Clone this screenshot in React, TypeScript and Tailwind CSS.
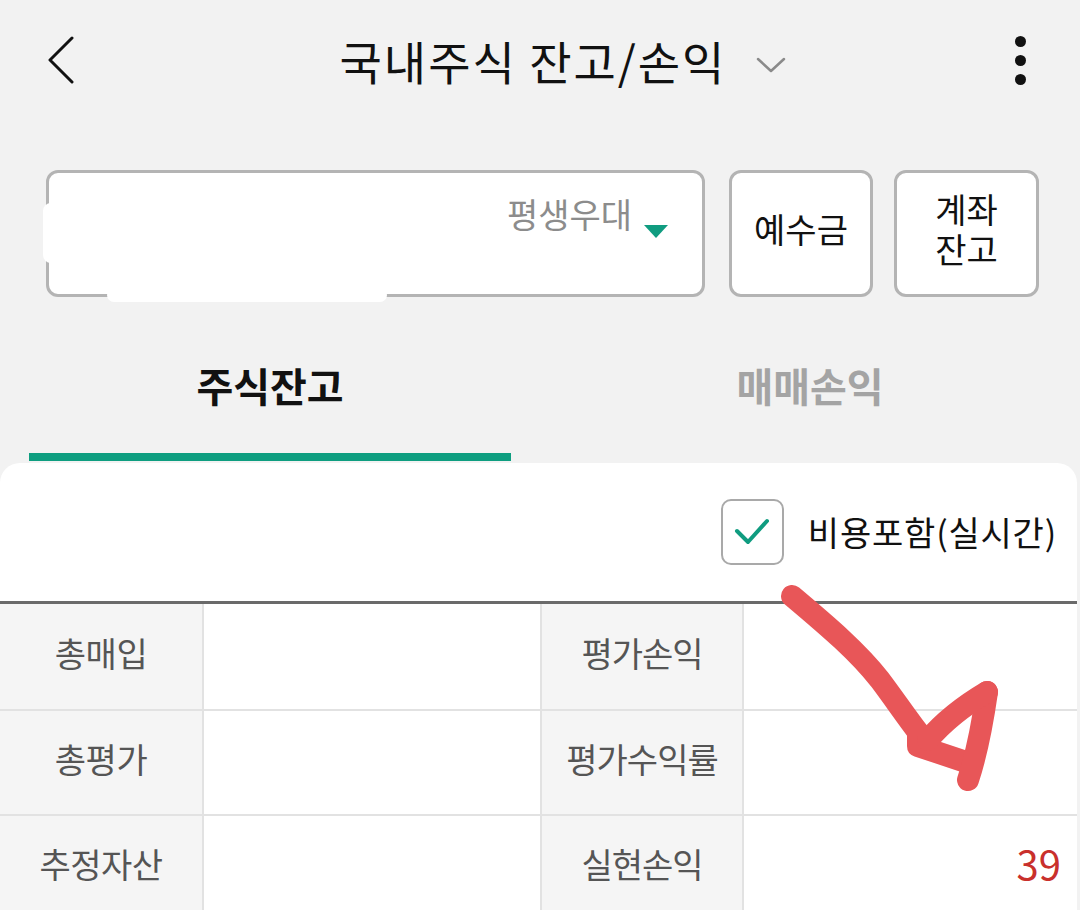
import React from 'react';

const rows = [
  ['총매입', '', '평가손익', ''],
  ['총평가', '', '평가수익률', ''],
  ['추정자산', '', '실현손익', '39'],
];

export default function App() {
  return (
    <div
      className="relative w-[1080px] h-[910px] overflow-hidden bg-[#f2f2f2] flex flex-col"
      style={{ fontFamily: '"Noto Sans CJK KR", "Noto Sans", sans-serif' }}
    >
      {/* Header */}
      <header className="h-[120px] flex items-center pl-[46px] pr-[54px] shrink-0">
        <svg width="30" height="48" viewBox="0 0 30 48" className="shrink-0">
          <path d="M26 2 L4 24 L26 46" fill="none" stroke="#111" strokeWidth="3" strokeLinecap="round" strokeLinejoin="round" />
        </svg>
        <div className="flex-1 flex justify-center items-center pl-[36px]">
          <h1 className="text-[46px] leading-none text-[#111] tracking-[2px]">국내주식 잔고/손익</h1>
          <svg width="30" height="16" viewBox="0 0 30 16" className="ml-[30px] mt-[10px]">
            <path d="M2 2 L15 14 L28 2" fill="none" stroke="#8a8a8a" strokeWidth="2.5" strokeLinecap="round" strokeLinejoin="round" />
          </svg>
        </div>
        <div className="flex flex-col items-center gap-[8px] w-[12px]">
          <span className="w-[11px] h-[11px] rounded-full bg-[#111]" />
          <span className="w-[11px] h-[11px] rounded-full bg-[#111]" />
          <span className="w-[11px] h-[11px] rounded-full bg-[#111]" />
        </div>
      </header>

      {/* Account selector + buttons */}
      <div className="mt-[50px] flex pl-[46px] pr-[41px] h-[127px] shrink-0">
        <div className="relative w-[659px] h-full bg-white border-[3px] border-[#b4b4b4] rounded-[12px] flex justify-end items-start pt-[20px] pr-[34px]">
          <span className="text-[34px] leading-none text-[#8c8c8c] mt-[4px]">평생우대</span>
          <span className="ml-[12px] mt-[32px] w-0 h-0 border-l-[12px] border-r-[12px] border-t-[13px] border-l-transparent border-r-transparent border-t-[#109c80]" />
          <span className="absolute left-[58px] bottom-[-8px] w-[280px] h-[14px] rounded-full bg-white" />
          <span className="absolute left-[-6px] top-[30px] w-[16px] h-[60px] rounded-full bg-white" />
        </div>
        <button className="ml-[24px] w-[144px] h-full pb-[10px] bg-white border-[3px] border-[#b4b4b4] rounded-[12px] flex items-center justify-center text-[34px] leading-none text-[#111]">
          예수금
        </button>
        <button className="ml-[21px] w-[145px] h-full pb-[10px] bg-white border-[3px] border-[#b4b4b4] rounded-[12px] flex flex-col items-center justify-center gap-[4px] text-[34px] leading-[36px] text-[#111]">
          <span className="block">계좌</span>
          <span className="block">잔고</span>
        </button>
      </div>

      {/* Tabs */}
      <div className="mt-[40px] flex px-[29px] gap-[58px] shrink-0">
        <div className="flex-1 h-[124px] flex items-center justify-center pb-[20px] border-b-[8px] border-[#0e9e80] text-[40px] font-bold text-[#111]">
          주식잔고
        </div>
        <div className="flex-1 h-[124px] flex items-center justify-center pb-[20px] border-b-[8px] border-transparent text-[40px] font-bold text-[#a4a4a4]">
          매매손익
        </div>
      </div>

      {/* Card */}
      <div className="mt-[2px] w-[1077px] flex-1 bg-white rounded-t-[20px] flex flex-col">
        <div className="h-[138px] flex items-center justify-end pr-[20px] shrink-0">
          <div className="w-[63px] h-[66px] rounded-[10px] border-[2px] border-[#a9a9a9] flex items-center justify-center">
            <svg width="40" height="32" viewBox="0 0 40 32">
              <path d="M5 15 L16 26 L35 5" fill="none" stroke="#109c80" strokeWidth="4" strokeLinecap="round" strokeLinejoin="round" />
            </svg>
          </div>
          <span className="ml-[24px] text-[34px] leading-none text-[#111] tracking-[0.8px]">비용포함(실시간)</span>
        </div>

        <div className="border-t-[3px] border-[#6a6a6a] flex flex-col">
          {rows.map((r, i) => (
            <div
              key={i}
              className={`grid grid-cols-[202px_338px_202px_1fr] h-[105px] ${i > 0 ? 'border-t-[2px] border-[#e2e2e2]' : ''}`}
            >
              <div className="bg-[#f5f5f5] flex items-center justify-center pb-[8px] text-[34px] text-[#555] tracking-[-0.5px]">{r[0]}</div>
              <div className="border-l-[2px] border-[#e2e2e2] flex items-center justify-end pr-[18px] text-[34px]">{r[1]}</div>
              <div className="bg-[#f5f5f5] border-l-[2px] border-[#e2e2e2] flex items-center justify-center pb-[8px] text-[34px] text-[#555] tracking-[-1px]">{r[2]}</div>
              <div className="border-l-[2px] border-[#e2e2e2] flex items-center justify-end pr-[16px] pb-[10px] text-[40px] text-[#c9302c]">{r[3]}</div>
            </div>
          ))}
        </div>
      </div>

      {/* Hand-drawn annotation */}
      <svg className="absolute inset-0 pointer-events-none" width="1080" height="910" viewBox="0 0 1080 910">
        <g fill="none" stroke="#e85658" strokeWidth="22" strokeLinecap="round" strokeLinejoin="round">
          <path d="M792 596 C830 628 858 652 880 680 C895 700 905 715 918 732 L918 746 L972 764" />
          <path d="M987 692 C983 720 978 750 968 780" />
          <path d="M987 692 C965 705 945 720 928 740" />
        </g>
      </svg>
    </div>
  );
}
